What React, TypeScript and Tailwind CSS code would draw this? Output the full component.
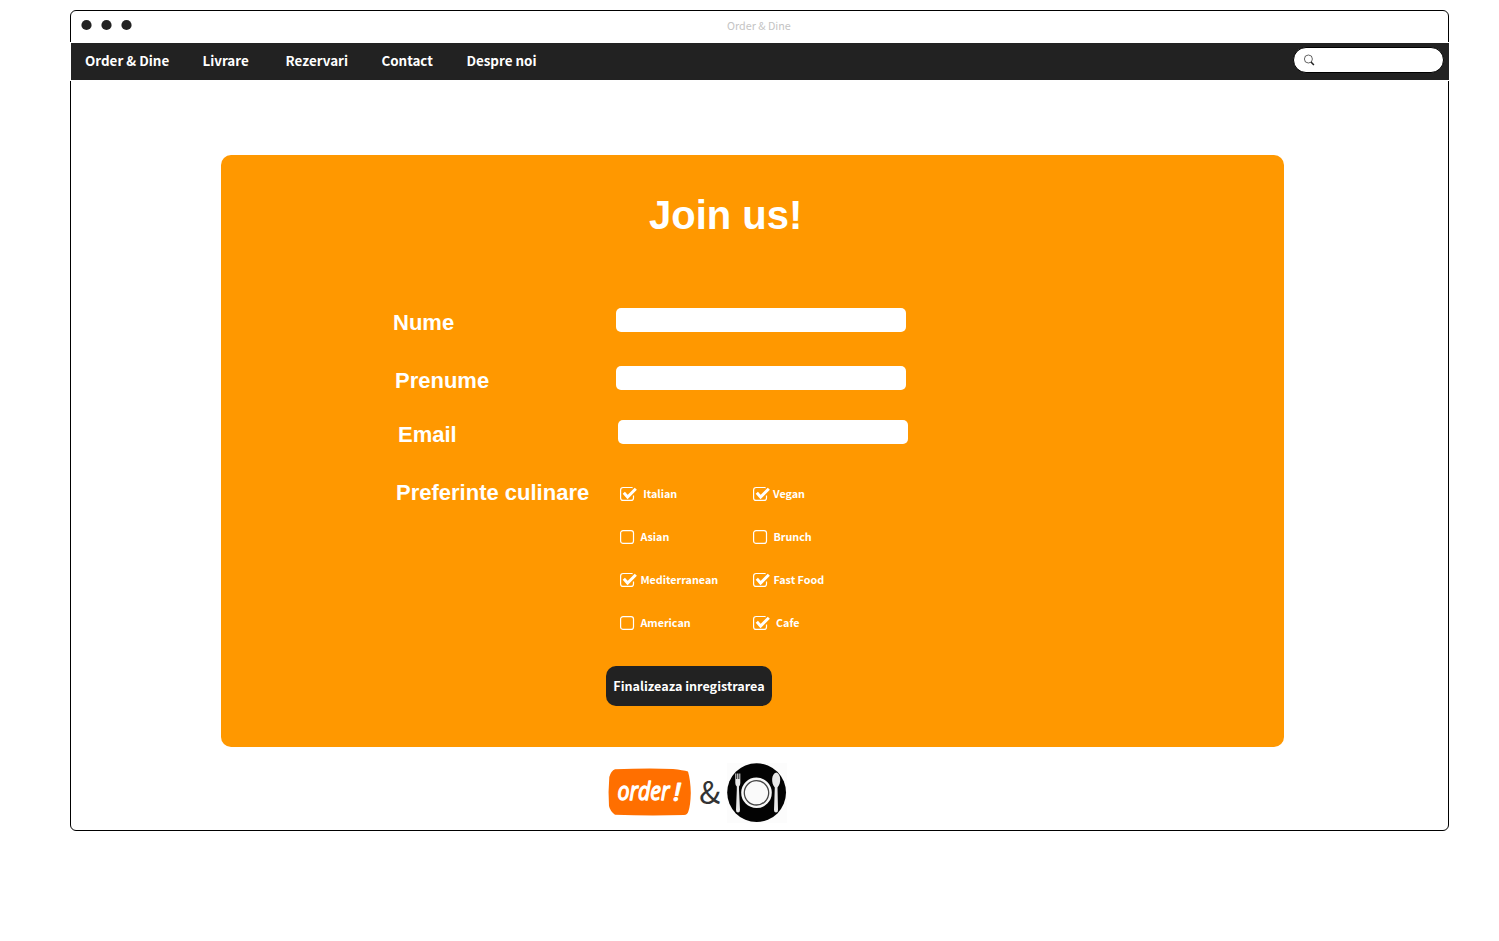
import React from "react";

const sans = "font-['Noto_Sans_CJK_SC',sans-serif]";

const links = [
  { label: "Order & Dine", width: "w-[117.4px]" },
  { label: "Livrare", width: "w-[83.2px]" },
  { label: "Rezervari", width: "w-[95.8px]" },
  { label: "Contact", width: "w-[85px]" },
  { label: "Despre noi", width: "w-[90px]" },
];

const fields = [
  { label: "Nume", row: "pl-[172px] mb-[34px]", labelWidth: "w-[223px]" },
  { label: "Prenume", row: "pl-[174px] mb-[30px]", labelWidth: "w-[221px]" },
  { label: "Email", row: "pl-[177px] mb-[34px]", labelWidth: "w-[220px]" },
];

const preferences = [
  { label: "Italian", checked: true, indent: "pl-[23.2px]" },
  { label: "Vegan", checked: true, indent: "pl-[20px]" },
  { label: "Asian", checked: false, indent: "pl-[20.4px]" },
  { label: "Brunch", checked: false, indent: "pl-[20.4px]" },
  { label: "Mediterranean", checked: true, indent: "pl-[20.4px]" },
  { label: "Fast Food", checked: true, indent: "pl-[20.4px]" },
  { label: "American", checked: false, indent: "pl-[20.4px]" },
  { label: "Cafe", checked: true, indent: "pl-[23px]" },
];

function CheckIcon({ checked }: { checked: boolean }) {
  return (
    <svg className="-mr-[18px] shrink-0" width="18" height="16" viewBox="0 0 18 16" fill="none" stroke="white">
      {checked ? (
        <>
          <path d="M12.6 1.6 Q12.2 1.5 11.6 1.5 H3.2 Q.6 1.5 .6 4.1 V11.9 Q.6 14.4 3.2 14.4 H11 Q13.5 14.4 13.5 11.9 V9.5" strokeWidth="1.2" />
          <path d="M3.8 6.8 L7.6 11 L15.8 2.8" strokeWidth="3" />
        </>
      ) : (
        <rect x=".6" y="1.6" width="12.9" height="12.8" rx="2.5" strokeWidth="1.2" />
      )}
    </svg>
  );
}

function WindowDots() {
  return (
    <svg className="mt-[8px] ml-[10px]" width="54" height="12" viewBox="0 0 54 12" fill="#222">
      <circle cx="5.5" cy="6" r="5.1" />
      <circle cx="25.5" cy="6" r="5.1" />
      <circle cx="45.5" cy="6" r="5.1" />
    </svg>
  );
}

function OrderLogo() {
  return (
    <svg width="84" height="48" viewBox="0 0 84 48">
      <path d="M7 1.3 Q40 0 65 1 Q75 2 80 3.5 Q82.5 12 82.8 25 Q82.5 37 80.5 43 Q79.5 47 76 47 Q42 48 7 46.8 Q2 43 1 38 Q0 24 1.3 9 Q3 3 7 1.3Z" fill="#ff6f00" />
      <g fontFamily="Open Sans" fontStyle="italic" fill="white" stroke="white" strokeLinejoin="round">
        <text x="9.5" y="32" fontSize="26" fontWeight="400" strokeWidth="1.3" textLength="52" lengthAdjust="spacingAndGlyphs">
          order
        </text>
        <text x="65.5" y="33" fontSize="26" fontWeight="600" strokeWidth=".8">
          !
        </text>
      </g>
    </svg>
  );
}

function DineLogo() {
  return (
    <svg width="60" height="60" viewBox="0 0 60 60">
      <rect width="60" height="60" fill="#fcfcfc" />
      <circle cx="29.6" cy="29.6" r="29.4" fill="#030303" />
      <circle cx="29.5" cy="29.8" r="15.3" fill="#f8f8f8" />
      <circle cx="29.5" cy="29.8" r="12.2" fill="#fafafa" stroke="#444" strokeWidth="1.3" />
      <g fill="#e8e8e8">
        <path d="M8.3 10.5 H9.3 V16 H10.2 V10.5 H11.4 V16 H12.3 V10.5 H13.3 V20 Q13.3 22.5 12 23.5 V27 L13 47 Q13 49.5 11 49.5 Q9 49.5 9 47 L9.8 27 V23.5 Q8.3 22.5 8.3 20Z" />
        <path d="M49.2 9.5 C44.4 10.5 43.8 20 47.8 24.5 L47 47 Q47 49.5 49 49.5 Q51.1 49.5 51 47 L50.5 24.5 C54.7 20 54 10.5 49.2 9.5Z" />
      </g>
    </svg>
  );
}

export default function App() {
  return (
    <div className={`h-[941px] w-[1499px] bg-white pt-[10px] pl-[70px] ${sans}`}>
      <div className="flex h-[821px] w-[1379px] flex-col rounded-[6px] border border-black">
        <header className="flex h-[31px] shrink-0 items-start">
          <WindowDots />
          <div className="ml-[592px] pt-[7px] text-[10.75px] leading-4 whitespace-nowrap text-[#c4c4c4]">Order &amp; Dine</div>
        </header>

        <nav className="-mr-[2px] -ml-px flex h-[39px] shrink-0 items-center justify-between border border-white bg-[#222] pr-[5px] pl-[14px]">
          <div className="mb-[3px] flex text-[13.4px] leading-5 font-bold text-white">
            {links.map((link) => (
              <a key={link.label} className={`${link.width} whitespace-nowrap`}>
                {link.label}
              </a>
            ))}
          </div>
          <div className="mb-[3px] flex h-[26px] w-[151px] items-center rounded-full border border-black bg-white pl-[10px]">
            <svg width="12" height="12" viewBox="0 0 12 12" fill="none" stroke="#222">
              <circle cx="4.4" cy="5" r="4" strokeWidth=".7" />
              <path d="M7 8 L9.9 11.1" strokeWidth="1.5" />
            </svg>
          </div>
        </nav>

        <main className="mt-[74px] ml-[150px] h-[592px] w-[1063px] shrink-0 rounded-[10px] bg-[#ff9800]">
          <h1 className="pt-[37px] pl-[428px] font-['Liberation_Sans',sans-serif] text-[40px] leading-[46px] font-bold text-white">
            Join us!
          </h1>
          <div className="pt-[70px]">
            {fields.map((field) => (
              <div key={field.label} className={`flex h-6 ${field.row}`}>
                <label className={`${field.labelWidth} pt-[3px] font-['Liberation_Sans',sans-serif] text-[22px] leading-6 font-bold text-white`}>
                  {field.label}
                </label>
                <div className="h-6 w-[290px] rounded-[5px] bg-white" />
              </div>
            ))}
          </div>
          <div className="flex pl-[175px]">
            <div className="w-[224px] pt-[3px] font-['Liberation_Sans',sans-serif] text-[22px] leading-6 font-bold whitespace-nowrap text-white">
              Preferinte culinare
            </div>
            <div className="grid auto-rows-[43px] grid-cols-[133px_133px] pt-2">
              {preferences.map((item) => (
                <div key={item.label} className="flex h-4 items-center">
                  <CheckIcon checked={item.checked} />
                  <span className={`${item.indent} text-[10.75px] leading-4 font-bold whitespace-nowrap text-white`}>{item.label}</span>
                </div>
              ))}
            </div>
          </div>
          <button className="mt-[8px] ml-[385px] flex h-10 w-[166px] items-center justify-center rounded-[10px] bg-[#222] text-[12.6px] font-bold whitespace-nowrap text-white">
            Finalizeaza inregistrarea
          </button>
        </main>

        <footer className="flex pt-[16px] pl-[537px]">
          <div className="pt-[5px]">
            <OrderLogo />
          </div>
          <span className="w-[35px] pt-[4px] pl-[7.3px] text-[31px] leading-[48px] text-[#333]">&amp;</span>
          <DineLogo />
        </footer>
      </div>
    </div>
  );
}
